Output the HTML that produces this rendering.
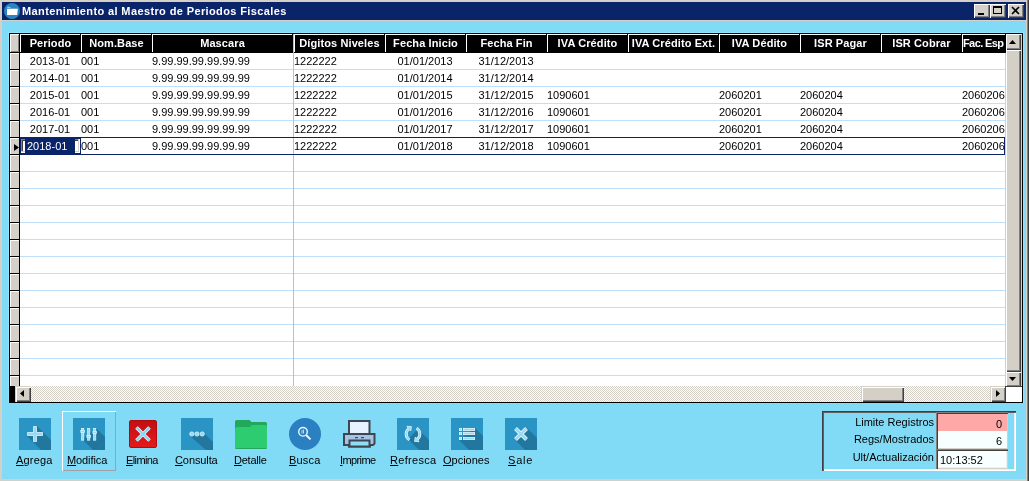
<!DOCTYPE html>
<html><head><meta charset="utf-8"><style>
*{margin:0;padding:0}
html,body{width:1029px;height:481px;overflow:hidden;background:#d4d0c8}
body{position:relative;will-change:transform;font-family:"Liberation Sans",sans-serif}
body>div,body>svg{position:absolute}
u{text-decoration:underline}
</style></head><body>
<div style="left:0px;top:0px;width:1029px;height:481px;background:#d4d0c8"></div>
<div style="left:1027px;top:0px;width:1px;height:481px;background:#808080"></div>
<div style="left:1028px;top:0px;width:1px;height:481px;background:#404040"></div>
<div style="left:2px;top:2px;width:1024px;height:18px;background:#0a246a"></div>
<div style="left:2px;top:21px;width:1024px;height:458px;background:#82dbf6"></div>
<svg style="left:4px;top:3px" width="16" height="16" viewBox="0 0 16 16"><circle cx="8" cy="8" r="7.7" fill="#2a84c2" stroke="#2e92d4" stroke-width="0.6"/><path d="M3.2 4.3h2.6l0.8 0.9" fill="none" stroke="#cde4f4" stroke-width="0.9"/><path d="M3 5.8H13.8L13.2 12H3z" fill="#ffffff"/></svg>
<div style="left:22px;top:2px;width:400px;height:18px;line-height:18px;font-weight:bold;font-size:11px;letter-spacing:0.38px;color:#fff;white-space:nowrap">Mantenimiento al Maestro de Periodos Fiscales</div>
<div style="left:974px;top:4px;width:16px;height:14px;background:#d4d0c8;box-shadow:inset 1px 1px 0 #fff, inset -1px -1px 0 #404040, inset -2px -2px 0 #808080"></div>
<div style="left:978px;top:13px;width:6px;height:2px;background:#000"></div>
<div style="left:990px;top:4px;width:16px;height:14px;background:#d4d0c8;box-shadow:inset 1px 1px 0 #fff, inset -1px -1px 0 #404040, inset -2px -2px 0 #808080"></div>
<div style="left:993px;top:6px;width:9px;height:8px;border:1px solid #000;border-top-width:2px;box-sizing:border-box"></div>
<div style="left:1008px;top:4px;width:16px;height:14px;background:#d4d0c8;box-shadow:inset 1px 1px 0 #fff, inset -1px -1px 0 #404040, inset -2px -2px 0 #808080"></div>
<svg style="left:1011px;top:6px" width="10" height="9" viewBox="0 0 10 9"><path d="M1 1L8 8M8 1L1 8" stroke="#000" stroke-width="1.6"/></svg>
<div style="left:8px;top:32px;width:1016px;height:1px;background:#8ce7ff"></div>
<div style="left:8px;top:32px;width:1px;height:371px;background:#8ce7ff"></div>
<div style="left:1023px;top:32px;width:1px;height:371px;background:#8ce7ff"></div>
<div style="left:9px;top:33px;width:1014px;height:370px;background:#000"></div>
<div style="left:20px;top:53px;width:985px;height:333px;background:#fff"></div>
<div style="left:20px;top:69px;width:985px;height:1px;background:#bfe0f8"></div>
<div style="left:20px;top:86px;width:985px;height:1px;background:#bfe0f8"></div>
<div style="left:20px;top:103px;width:985px;height:1px;background:#bfe0f8"></div>
<div style="left:20px;top:120px;width:985px;height:1px;background:#bfe0f8"></div>
<div style="left:20px;top:137px;width:985px;height:1px;background:#bfe0f8"></div>
<div style="left:20px;top:154px;width:985px;height:1px;background:#bfe0f8"></div>
<div style="left:20px;top:171px;width:985px;height:1px;background:#bfe0f8"></div>
<div style="left:20px;top:188px;width:985px;height:1px;background:#bfe0f8"></div>
<div style="left:20px;top:205px;width:985px;height:1px;background:#bfe0f8"></div>
<div style="left:20px;top:222px;width:985px;height:1px;background:#bfe0f8"></div>
<div style="left:20px;top:239px;width:985px;height:1px;background:#bfe0f8"></div>
<div style="left:20px;top:256px;width:985px;height:1px;background:#bfe0f8"></div>
<div style="left:20px;top:273px;width:985px;height:1px;background:#bfe0f8"></div>
<div style="left:20px;top:290px;width:985px;height:1px;background:#bfe0f8"></div>
<div style="left:20px;top:307px;width:985px;height:1px;background:#bfe0f8"></div>
<div style="left:20px;top:324px;width:985px;height:1px;background:#bfe0f8"></div>
<div style="left:20px;top:341px;width:985px;height:1px;background:#bfe0f8"></div>
<div style="left:20px;top:358px;width:985px;height:1px;background:#bfe0f8"></div>
<div style="left:20px;top:375px;width:985px;height:1px;background:#bfe0f8"></div>
<div style="left:10px;top:34px;width:9px;height:18px;background:#d4d0c8;box-shadow:inset 1px 1px 0 #fff, inset -1px -1px 0 #808080"></div>
<div style="left:10px;top:53px;width:9px;height:16px;background:#d4d0c8;box-shadow:inset 1px 1px 0 #fff"></div>
<div style="left:10px;top:70px;width:9px;height:16px;background:#d4d0c8;box-shadow:inset 1px 1px 0 #fff"></div>
<div style="left:10px;top:87px;width:9px;height:16px;background:#d4d0c8;box-shadow:inset 1px 1px 0 #fff"></div>
<div style="left:10px;top:104px;width:9px;height:16px;background:#d4d0c8;box-shadow:inset 1px 1px 0 #fff"></div>
<div style="left:10px;top:121px;width:9px;height:16px;background:#d4d0c8;box-shadow:inset 1px 1px 0 #fff"></div>
<div style="left:10px;top:138px;width:9px;height:16px;background:#d4d0c8;box-shadow:inset 1px 1px 0 #fff"></div>
<div style="left:10px;top:155px;width:9px;height:16px;background:#d4d0c8;box-shadow:inset 1px 1px 0 #fff"></div>
<div style="left:10px;top:172px;width:9px;height:16px;background:#d4d0c8;box-shadow:inset 1px 1px 0 #fff"></div>
<div style="left:10px;top:189px;width:9px;height:16px;background:#d4d0c8;box-shadow:inset 1px 1px 0 #fff"></div>
<div style="left:10px;top:206px;width:9px;height:16px;background:#d4d0c8;box-shadow:inset 1px 1px 0 #fff"></div>
<div style="left:10px;top:223px;width:9px;height:16px;background:#d4d0c8;box-shadow:inset 1px 1px 0 #fff"></div>
<div style="left:10px;top:240px;width:9px;height:16px;background:#d4d0c8;box-shadow:inset 1px 1px 0 #fff"></div>
<div style="left:10px;top:257px;width:9px;height:16px;background:#d4d0c8;box-shadow:inset 1px 1px 0 #fff"></div>
<div style="left:10px;top:274px;width:9px;height:16px;background:#d4d0c8;box-shadow:inset 1px 1px 0 #fff"></div>
<div style="left:10px;top:291px;width:9px;height:16px;background:#d4d0c8;box-shadow:inset 1px 1px 0 #fff"></div>
<div style="left:10px;top:308px;width:9px;height:16px;background:#d4d0c8;box-shadow:inset 1px 1px 0 #fff"></div>
<div style="left:10px;top:325px;width:9px;height:16px;background:#d4d0c8;box-shadow:inset 1px 1px 0 #fff"></div>
<div style="left:10px;top:342px;width:9px;height:16px;background:#d4d0c8;box-shadow:inset 1px 1px 0 #fff"></div>
<div style="left:10px;top:359px;width:9px;height:16px;background:#d4d0c8;box-shadow:inset 1px 1px 0 #fff"></div>
<div style="left:10px;top:376px;width:9px;height:10px;background:#d4d0c8;box-shadow:inset 1px 1px 0 #fff"></div>
<div style="left:20px;top:34px;width:60px;height:18px;border-top:1px solid #fff;border-left:1px solid #fff;box-sizing:border-box;color:#fff;font-weight:bold;font-size:11px;letter-spacing:0.1px;line-height:17px;text-align:center;white-space:nowrap;overflow:hidden">Periodo</div>
<div style="left:81px;top:34px;width:70px;height:18px;border-top:1px solid #fff;border-left:1px solid #fff;box-sizing:border-box;color:#fff;font-weight:bold;font-size:11px;letter-spacing:0.1px;line-height:17px;text-align:center;white-space:nowrap;overflow:hidden">Nom.Base</div>
<div style="left:152px;top:34px;width:140px;height:18px;border-top:1px solid #fff;border-left:1px solid #fff;box-sizing:border-box;color:#fff;font-weight:bold;font-size:11px;letter-spacing:0.1px;line-height:17px;text-align:center;white-space:nowrap;overflow:hidden">Mascara</div>
<div style="left:294px;top:34px;width:90px;height:18px;border-top:1px solid #fff;border-left:1px solid #fff;box-sizing:border-box;color:#fff;font-weight:bold;font-size:11px;letter-spacing:0.1px;line-height:17px;text-align:center;white-space:nowrap;overflow:hidden">Dígitos Niveles</div>
<div style="left:385px;top:34px;width:80px;height:18px;border-top:1px solid #fff;border-left:1px solid #fff;box-sizing:border-box;color:#fff;font-weight:bold;font-size:11px;letter-spacing:0.1px;line-height:17px;text-align:center;white-space:nowrap;overflow:hidden">Fecha Inicio</div>
<div style="left:466px;top:34px;width:80px;height:18px;border-top:1px solid #fff;border-left:1px solid #fff;box-sizing:border-box;color:#fff;font-weight:bold;font-size:11px;letter-spacing:0.1px;line-height:17px;text-align:center;white-space:nowrap;overflow:hidden">Fecha Fin</div>
<div style="left:547px;top:34px;width:80px;height:18px;border-top:1px solid #fff;border-left:1px solid #fff;box-sizing:border-box;color:#fff;font-weight:bold;font-size:11px;letter-spacing:0.1px;line-height:17px;text-align:center;white-space:nowrap;overflow:hidden">IVA Crédito</div>
<div style="left:628px;top:34px;width:90px;height:18px;border-top:1px solid #fff;border-left:1px solid #fff;box-sizing:border-box;color:#fff;font-weight:bold;font-size:11px;letter-spacing:0.1px;line-height:17px;text-align:center;white-space:nowrap;overflow:hidden">IVA Crédito Ext.</div>
<div style="left:719px;top:34px;width:80px;height:18px;border-top:1px solid #fff;border-left:1px solid #fff;box-sizing:border-box;color:#fff;font-weight:bold;font-size:11px;letter-spacing:0.1px;line-height:17px;text-align:center;white-space:nowrap;overflow:hidden">IVA Dédito</div>
<div style="left:800px;top:34px;width:80px;height:18px;border-top:1px solid #fff;border-left:1px solid #fff;box-sizing:border-box;color:#fff;font-weight:bold;font-size:11px;letter-spacing:0.1px;line-height:17px;text-align:center;white-space:nowrap;overflow:hidden">ISR Pagar</div>
<div style="left:881px;top:34px;width:80px;height:18px;border-top:1px solid #fff;border-left:1px solid #fff;box-sizing:border-box;color:#fff;font-weight:bold;font-size:11px;letter-spacing:0.1px;line-height:17px;text-align:center;white-space:nowrap;overflow:hidden">ISR Cobrar</div>
<div style="left:962px;top:34px;width:43px;height:18px;border-top:1px solid #fff;border-left:1px solid #fff;box-sizing:border-box;color:#fff;font-weight:bold;font-size:11px;letter-spacing:0.1px;line-height:17px;text-align:center;white-space:nowrap;overflow:hidden;text-align:left;text-indent:0px;letter-spacing:-0.6px">Fac. Esp</div>
<div style="left:293px;top:34px;width:1px;height:352px;background:#80d6f2"></div>
<div style="left:20px;top:53px;width:60px;height:16px;font-size:11px;line-height:16px;text-align:center;color:#000;white-space:nowrap;overflow:hidden">2013-01</div>
<div style="left:81px;top:53px;width:70px;height:16px;font-size:11px;line-height:16px;text-align:left;padding-left:0px;color:#000;white-space:nowrap;overflow:hidden;box-sizing:border-box">001</div>
<div style="left:152px;top:53px;width:140px;height:16px;font-size:11px;line-height:16px;text-align:left;padding-left:0px;color:#000;white-space:nowrap;overflow:hidden;box-sizing:border-box">9.99.99.99.99.99.99</div>
<div style="left:294px;top:53px;width:90px;height:16px;font-size:11px;line-height:16px;text-align:left;padding-left:0px;color:#000;white-space:nowrap;overflow:hidden;box-sizing:border-box">1222222</div>
<div style="left:385px;top:53px;width:80px;height:16px;font-size:11px;line-height:16px;text-align:center;color:#000;white-space:nowrap;overflow:hidden">01/01/2013</div>
<div style="left:466px;top:53px;width:80px;height:16px;font-size:11px;line-height:16px;text-align:center;color:#000;white-space:nowrap;overflow:hidden">31/12/2013</div>
<div style="left:20px;top:70px;width:60px;height:16px;font-size:11px;line-height:16px;text-align:center;color:#000;white-space:nowrap;overflow:hidden">2014-01</div>
<div style="left:81px;top:70px;width:70px;height:16px;font-size:11px;line-height:16px;text-align:left;padding-left:0px;color:#000;white-space:nowrap;overflow:hidden;box-sizing:border-box">001</div>
<div style="left:152px;top:70px;width:140px;height:16px;font-size:11px;line-height:16px;text-align:left;padding-left:0px;color:#000;white-space:nowrap;overflow:hidden;box-sizing:border-box">9.99.99.99.99.99.99</div>
<div style="left:294px;top:70px;width:90px;height:16px;font-size:11px;line-height:16px;text-align:left;padding-left:0px;color:#000;white-space:nowrap;overflow:hidden;box-sizing:border-box">1222222</div>
<div style="left:385px;top:70px;width:80px;height:16px;font-size:11px;line-height:16px;text-align:center;color:#000;white-space:nowrap;overflow:hidden">01/01/2014</div>
<div style="left:466px;top:70px;width:80px;height:16px;font-size:11px;line-height:16px;text-align:center;color:#000;white-space:nowrap;overflow:hidden">31/12/2014</div>
<div style="left:20px;top:87px;width:60px;height:16px;font-size:11px;line-height:16px;text-align:center;color:#000;white-space:nowrap;overflow:hidden">2015-01</div>
<div style="left:81px;top:87px;width:70px;height:16px;font-size:11px;line-height:16px;text-align:left;padding-left:0px;color:#000;white-space:nowrap;overflow:hidden;box-sizing:border-box">001</div>
<div style="left:152px;top:87px;width:140px;height:16px;font-size:11px;line-height:16px;text-align:left;padding-left:0px;color:#000;white-space:nowrap;overflow:hidden;box-sizing:border-box">9.99.99.99.99.99.99</div>
<div style="left:294px;top:87px;width:90px;height:16px;font-size:11px;line-height:16px;text-align:left;padding-left:0px;color:#000;white-space:nowrap;overflow:hidden;box-sizing:border-box">1222222</div>
<div style="left:385px;top:87px;width:80px;height:16px;font-size:11px;line-height:16px;text-align:center;color:#000;white-space:nowrap;overflow:hidden">01/01/2015</div>
<div style="left:466px;top:87px;width:80px;height:16px;font-size:11px;line-height:16px;text-align:center;color:#000;white-space:nowrap;overflow:hidden">31/12/2015</div>
<div style="left:547px;top:87px;width:80px;height:16px;font-size:11px;line-height:16px;text-align:left;padding-left:0px;color:#000;white-space:nowrap;overflow:hidden;box-sizing:border-box">1090601</div>
<div style="left:719px;top:87px;width:80px;height:16px;font-size:11px;line-height:16px;text-align:left;padding-left:0px;color:#000;white-space:nowrap;overflow:hidden;box-sizing:border-box">2060201</div>
<div style="left:800px;top:87px;width:80px;height:16px;font-size:11px;line-height:16px;text-align:left;padding-left:0px;color:#000;white-space:nowrap;overflow:hidden;box-sizing:border-box">2060204</div>
<div style="left:962px;top:87px;width:43px;height:16px;font-size:11px;line-height:16px;text-align:left;padding-left:0px;color:#000;white-space:nowrap;overflow:hidden;box-sizing:border-box">2060206</div>
<div style="left:20px;top:104px;width:60px;height:16px;font-size:11px;line-height:16px;text-align:center;color:#000;white-space:nowrap;overflow:hidden">2016-01</div>
<div style="left:81px;top:104px;width:70px;height:16px;font-size:11px;line-height:16px;text-align:left;padding-left:0px;color:#000;white-space:nowrap;overflow:hidden;box-sizing:border-box">001</div>
<div style="left:152px;top:104px;width:140px;height:16px;font-size:11px;line-height:16px;text-align:left;padding-left:0px;color:#000;white-space:nowrap;overflow:hidden;box-sizing:border-box">9.99.99.99.99.99.99</div>
<div style="left:294px;top:104px;width:90px;height:16px;font-size:11px;line-height:16px;text-align:left;padding-left:0px;color:#000;white-space:nowrap;overflow:hidden;box-sizing:border-box">1222222</div>
<div style="left:385px;top:104px;width:80px;height:16px;font-size:11px;line-height:16px;text-align:center;color:#000;white-space:nowrap;overflow:hidden">01/01/2016</div>
<div style="left:466px;top:104px;width:80px;height:16px;font-size:11px;line-height:16px;text-align:center;color:#000;white-space:nowrap;overflow:hidden">31/12/2016</div>
<div style="left:547px;top:104px;width:80px;height:16px;font-size:11px;line-height:16px;text-align:left;padding-left:0px;color:#000;white-space:nowrap;overflow:hidden;box-sizing:border-box">1090601</div>
<div style="left:719px;top:104px;width:80px;height:16px;font-size:11px;line-height:16px;text-align:left;padding-left:0px;color:#000;white-space:nowrap;overflow:hidden;box-sizing:border-box">2060201</div>
<div style="left:800px;top:104px;width:80px;height:16px;font-size:11px;line-height:16px;text-align:left;padding-left:0px;color:#000;white-space:nowrap;overflow:hidden;box-sizing:border-box">2060204</div>
<div style="left:962px;top:104px;width:43px;height:16px;font-size:11px;line-height:16px;text-align:left;padding-left:0px;color:#000;white-space:nowrap;overflow:hidden;box-sizing:border-box">2060206</div>
<div style="left:20px;top:121px;width:60px;height:16px;font-size:11px;line-height:16px;text-align:center;color:#000;white-space:nowrap;overflow:hidden">2017-01</div>
<div style="left:81px;top:121px;width:70px;height:16px;font-size:11px;line-height:16px;text-align:left;padding-left:0px;color:#000;white-space:nowrap;overflow:hidden;box-sizing:border-box">001</div>
<div style="left:152px;top:121px;width:140px;height:16px;font-size:11px;line-height:16px;text-align:left;padding-left:0px;color:#000;white-space:nowrap;overflow:hidden;box-sizing:border-box">9.99.99.99.99.99.99</div>
<div style="left:294px;top:121px;width:90px;height:16px;font-size:11px;line-height:16px;text-align:left;padding-left:0px;color:#000;white-space:nowrap;overflow:hidden;box-sizing:border-box">1222222</div>
<div style="left:385px;top:121px;width:80px;height:16px;font-size:11px;line-height:16px;text-align:center;color:#000;white-space:nowrap;overflow:hidden">01/01/2017</div>
<div style="left:466px;top:121px;width:80px;height:16px;font-size:11px;line-height:16px;text-align:center;color:#000;white-space:nowrap;overflow:hidden">31/12/2017</div>
<div style="left:547px;top:121px;width:80px;height:16px;font-size:11px;line-height:16px;text-align:left;padding-left:0px;color:#000;white-space:nowrap;overflow:hidden;box-sizing:border-box">1090601</div>
<div style="left:719px;top:121px;width:80px;height:16px;font-size:11px;line-height:16px;text-align:left;padding-left:0px;color:#000;white-space:nowrap;overflow:hidden;box-sizing:border-box">2060201</div>
<div style="left:800px;top:121px;width:80px;height:16px;font-size:11px;line-height:16px;text-align:left;padding-left:0px;color:#000;white-space:nowrap;overflow:hidden;box-sizing:border-box">2060204</div>
<div style="left:962px;top:121px;width:43px;height:16px;font-size:11px;line-height:16px;text-align:left;padding-left:0px;color:#000;white-space:nowrap;overflow:hidden;box-sizing:border-box">2060206</div>
<div style="left:20px;top:137px;width:985px;height:18px;border:1px solid #0a246a;box-sizing:border-box"></div>
<div style="left:20px;top:138px;width:61px;height:16px;background:#0a246a"></div>
<div style="left:21px;top:139px;width:59px;height:14px;background:#fff;box-shadow:inset -1px -1px 0 #fff, inset -2px -2px 0 #d4d0c8, inset 1px 1px 0 #808080, inset 2px 2px 0 #404040"></div>
<div style="left:25px;top:138px;width:50px;height:16px;background:#0a246a"></div>
<svg style="left:14px;top:144px" width="5" height="7" viewBox="0 0 5 7"><path d="M0 0L5 3.5L0 7z" fill="#000"/></svg>
<div style="left:27px;top:138px;width:50px;height:16px;font-size:11px;line-height:16px;color:#fff;white-space:nowrap">2018-01</div>
<div style="left:81px;top:138px;width:70px;height:16px;font-size:11px;line-height:16px;text-align:left;padding-left:0px;color:#000;white-space:nowrap;overflow:hidden;box-sizing:border-box">001</div>
<div style="left:152px;top:138px;width:140px;height:16px;font-size:11px;line-height:16px;text-align:left;padding-left:0px;color:#000;white-space:nowrap;overflow:hidden;box-sizing:border-box">9.99.99.99.99.99.99</div>
<div style="left:294px;top:138px;width:90px;height:16px;font-size:11px;line-height:16px;text-align:left;padding-left:0px;color:#000;white-space:nowrap;overflow:hidden;box-sizing:border-box">1222222</div>
<div style="left:385px;top:138px;width:80px;height:16px;font-size:11px;line-height:16px;text-align:center;color:#000;white-space:nowrap;overflow:hidden">01/01/2018</div>
<div style="left:466px;top:138px;width:80px;height:16px;font-size:11px;line-height:16px;text-align:center;color:#000;white-space:nowrap;overflow:hidden">31/12/2018</div>
<div style="left:547px;top:138px;width:80px;height:16px;font-size:11px;line-height:16px;text-align:left;padding-left:0px;color:#000;white-space:nowrap;overflow:hidden;box-sizing:border-box">1090601</div>
<div style="left:719px;top:138px;width:80px;height:16px;font-size:11px;line-height:16px;text-align:left;padding-left:0px;color:#000;white-space:nowrap;overflow:hidden;box-sizing:border-box">2060201</div>
<div style="left:800px;top:138px;width:80px;height:16px;font-size:11px;line-height:16px;text-align:left;padding-left:0px;color:#000;white-space:nowrap;overflow:hidden;box-sizing:border-box">2060204</div>
<div style="left:962px;top:138px;width:43px;height:16px;font-size:11px;line-height:16px;text-align:left;padding-left:0px;color:#000;white-space:nowrap;overflow:hidden;box-sizing:border-box">2060206</div>
<div style="left:1006px;top:34px;width:15px;height:353px;background:#d4d0c8"></div>
<div style="left:1006px;top:34px;width:15px;height:16px;background:#d4d0c8;box-shadow:inset 1px 1px 0 #fff, inset -1px -1px 0 #404040, inset -2px -2px 0 #808080"></div>
<svg style="left:1009px;top:40px" width="7" height="4" viewBox="0 0 7 4"><path d="M3.5 0L7 4H0z" fill="#000"/></svg>
<div style="left:1006px;top:50px;width:15px;height:322px;background:#d4d0c8;box-shadow:inset 1px 1px 0 #fff, inset -1px -1px 0 #404040, inset -2px -2px 0 #808080"></div>
<div style="left:1006px;top:372px;width:15px;height:15px;background:#d4d0c8;box-shadow:inset 1px 1px 0 #fff, inset -1px -1px 0 #404040, inset -2px -2px 0 #808080"></div>
<svg style="left:1009px;top:377px" width="7" height="4" viewBox="0 0 7 4"><path d="M0 0H7L3.5 4z" fill="#000"/></svg>
<div style="left:1021px;top:34px;width:1px;height:353px;background:#8ce7ff"></div>
<div style="left:1005px;top:53px;width:1px;height:333px;background:#d4d0c8"></div>
<div style="left:31px;top:386px;width:959px;height:16px;background-color:#fff;background-image:repeating-conic-gradient(#d4d0c8 0 25%, #fff 0 50%);background-size:2px 2px"></div>
<div style="left:15px;top:386px;width:16px;height:16px;background:#d4d0c8;box-shadow:inset 1px 1px 0 #d4d0c8, inset 2px 2px 0 #fff, inset -1px -1px 0 #404040, inset -2px -2px 0 #808080;"></div>
<svg style="left:20px;top:390px" width="4" height="7" viewBox="0 0 4 7"><path d="M4 0V7L0 3.5z" fill="#000"/></svg>
<div style="left:861px;top:386px;width:43px;height:16px;background:#d4d0c8;box-shadow:inset 1px 1px 0 #d4d0c8, inset 2px 2px 0 #fff, inset -1px -1px 0 #404040, inset -2px -2px 0 #808080;"></div>
<div style="left:990px;top:386px;width:16px;height:16px;background:#d4d0c8;box-shadow:inset 1px 1px 0 #d4d0c8, inset 2px 2px 0 #fff, inset -1px -1px 0 #404040, inset -2px -2px 0 #808080;"></div>
<svg style="left:996px;top:390px" width="4" height="7" viewBox="0 0 4 7"><path d="M0 0V7L4 3.5z" fill="#000"/></svg>
<div style="left:1006px;top:387px;width:16px;height:15px;background:#fff"></div>
<div style="left:1005px;top:386px;width:1px;height:16px;background:#404040"></div>
<div style="left:1005px;top:386px;width:17px;height:1px;background:#404040"></div>
<div style="left:62px;top:411px;width:54px;height:60px;box-shadow:inset 1px 1px 0 #fff, inset -1px -1px 0 #a0a0a0"></div>
<svg style="left:19px;top:418px" width="32" height="32" viewBox="0 0 32 32"><rect width="32" height="32" fill="#2a95c4"/><path d="M18 8L32 22V32H22L8 18V14H14V8z" fill="#22779f"/><path d="M14.5 8.5h3v6h6v3h-6v6h-3v-6h-6v-3h6z" fill="#98daf3" stroke="#e2f6ff" stroke-width="0.8"/></svg>
<svg style="left:73px;top:418px" width="32" height="32" viewBox="0 0 32 32"><rect width="32" height="32" fill="#2a95c4"/><path d="M23 10L32 19V32H20L9 21z" fill="#22779f"/><g fill="#98daf3" stroke="#e2f6ff" stroke-width="0.7"><rect x="8.6" y="10.4" width="2.2" height="11.8"/><rect x="14.6" y="10.4" width="2.2" height="11.8"/><rect x="20.6" y="10.4" width="2.2" height="11.8"/><rect x="7.8" y="12.6" width="3.8" height="1.8"/><rect x="13.8" y="17.6" width="3.8" height="1.8"/><rect x="19.8" y="13.6" width="3.8" height="1.8"/></g></svg>
<svg style="left:129px;top:420px" width="28" height="28" viewBox="0 0 28 28"><defs><linearGradient id="rg" x1="0" y1="0" x2="0" y2="1"><stop offset="0" stop-color="#c01014"/><stop offset="1" stop-color="#e41a1a"/></linearGradient></defs><rect x="0.5" y="0.5" width="27" height="27" rx="1.5" fill="url(#rg)" stroke="#b00c10" stroke-width="1"/><path d="M7.5 7.5L20.5 20.5M20.5 7.5L7.5 20.5" stroke="#e2f6ff" stroke-width="3.6"/><path d="M7.5 7.5L20.5 20.5M20.5 7.5L7.5 20.5" stroke="#88d4f0" stroke-width="2"/></svg>
<svg style="left:181px;top:418px" width="32" height="32" viewBox="0 0 32 32"><rect width="32" height="32" fill="#2a95c4"/><path d="M22 14L32 24V32H25L9 18z" fill="#22779f"/><g fill="#98daf3" stroke="#e2f6ff" stroke-width="0.8"><circle cx="10.8" cy="16" r="2.1"/><circle cx="16" cy="16" r="2.1"/><circle cx="21.2" cy="16" r="2.1"/></g></svg>
<svg style="left:235px;top:420px" width="32" height="29" viewBox="0 0 32 29"><path d="M1.5 0H14.5L16.5 2H30.5Q32 2 32 3.5V27.5Q32 29 30.5 29H1.5Q0 29 0 27.5V1.5Q0 0 1.5 0z" fill="#22a85a"/><path d="M2.5 7H15L17 5H30.5Q32 5 32 6.5V27.5Q32 28 31 28H1Q0 28 0 27V9.5Q0 7 2.5 7z" fill="#2ecc71"/></svg>
<svg style="left:289px;top:418px" width="32" height="32" viewBox="0 0 32 32"><circle cx="16" cy="16" r="16" fill="#2a80c0"/><circle cx="14" cy="13.8" r="4.3" fill="none" stroke="#eef8ff" stroke-width="1.4"/><path d="M17.3 17.2L21.5 21.4" stroke="#eef8ff" stroke-width="2"/><path d="M13 12v3.5M14.5 11.5v4" stroke="#dff0ff" stroke-width="0.8"/></svg>
<svg style="left:343px;top:420px" width="33" height="28" viewBox="0 0 33 28"><rect x="6" y="1" width="20.5" height="13.5" fill="#e6f2ff" stroke="#3d4651" stroke-width="2"/><path d="M1 14H31.5V23.5L30 25H27V26.5H6V25H1z" fill="#a6c2e4" stroke="#3d4651" stroke-width="2"/><rect x="6.5" y="20.5" width="20" height="6" fill="#8fdcf6" stroke="#3d4651" stroke-width="2"/><rect x="12" y="17" width="3" height="1.3" rx="0.6" fill="#3d4651"/><rect x="18" y="17" width="3" height="1.3" rx="0.6" fill="#3d4651"/></svg>
<svg style="left:397px;top:418px" width="32" height="32" viewBox="0 0 32 32"><rect width="32" height="32" fill="#2a95c4"/><path d="M21 11L32 22V32H22L11 21z" fill="#22779f"/><path d="M12.40 21.77A6.8 6.8 0 0 1 11.81 10.64M19.60 10.23A6.8 6.8 0 0 1 20.19 21.36" fill="none" stroke="#e2f6ff" stroke-width="3"/><path d="M14.34 8.67L9.97 8.28L13.66 13.01zM17.66 23.33L22.03 23.72L18.34 18.99z" fill="#e2f6ff" stroke="#e2f6ff" stroke-width="1"/><path d="M12.40 21.77A6.8 6.8 0 0 1 11.81 10.64M19.60 10.23A6.8 6.8 0 0 1 20.19 21.36" fill="none" stroke="#98daf3" stroke-width="1.6"/><path d="M14.34 8.67L9.97 8.28L13.66 13.01zM17.66 23.33L22.03 23.72L18.34 18.99z" fill="#98daf3"/></svg>
<svg style="left:451px;top:418px" width="32" height="32" viewBox="0 0 32 32"><rect width="32" height="32" fill="#2a95c4"/><path d="M24 10L32 18V32H18L8 22z" fill="#22779f"/><g fill="#98daf3" stroke="#e2f6ff" stroke-width="0.8"><rect x="8.4" y="10.4" width="2.2" height="2.2"/><rect x="8.4" y="14.4" width="2.2" height="2.2"/><rect x="8.4" y="19.4" width="2.2" height="2.2"/><rect x="12.4" y="10.4" width="11.2" height="2.2"/><rect x="12.4" y="14.4" width="11.2" height="2.2"/><rect x="12.4" y="19.4" width="11.2" height="2.2"/></g></svg>
<svg style="left:505px;top:418px" width="32" height="32" viewBox="0 0 32 32"><rect width="32" height="32" fill="#2a95c4"/><path d="M22 10L32 20V32H20L10 22z" fill="#22779f"/><path d="M10.5 10.5L21.5 21.5M21.5 10.5L10.5 21.5" stroke="#e2f6ff" stroke-width="4"/><path d="M10.5 10.5L21.5 21.5M21.5 10.5L10.5 21.5" stroke="#98daf3" stroke-width="2.4"/></svg>
<div style="left:16px;top:453px;width:80px;height:14px;font-size:11px;line-height:14px;letter-spacing:0.2px;color:#000;white-space:nowrap"><u>A</u>grega</div>
<div style="left:67px;top:453px;width:80px;height:14px;font-size:11px;line-height:14px;letter-spacing:-0.1px;color:#000;white-space:nowrap"><u>M</u>odifica</div>
<div style="left:126px;top:453px;width:80px;height:14px;font-size:11px;line-height:14px;letter-spacing:-0.6px;color:#000;white-space:nowrap"><u>E</u>limina</div>
<div style="left:175px;top:453px;width:80px;height:14px;font-size:11px;line-height:14px;letter-spacing:-0.1px;color:#000;white-space:nowrap"><u>C</u>onsulta</div>
<div style="left:234px;top:453px;width:80px;height:14px;font-size:11px;line-height:14px;letter-spacing:-0.25px;color:#000;white-space:nowrap"><u>D</u>etalle</div>
<div style="left:289px;top:453px;width:80px;height:14px;font-size:11px;line-height:14px;letter-spacing:0.2px;color:#000;white-space:nowrap"><u>B</u>usca</div>
<div style="left:340px;top:453px;width:80px;height:14px;font-size:11px;line-height:14px;letter-spacing:-0.6px;color:#000;white-space:nowrap"><u>I</u>mprime</div>
<div style="left:390px;top:453px;width:80px;height:14px;font-size:11px;line-height:14px;letter-spacing:0.3px;color:#000;white-space:nowrap"><u>R</u>efresca</div>
<div style="left:443px;top:453px;width:80px;height:14px;font-size:11px;line-height:14px;letter-spacing:0px;color:#000;white-space:nowrap"><u>O</u>pciones</div>
<div style="left:508px;top:453px;width:80px;height:14px;font-size:11px;line-height:14px;letter-spacing:0.8px;color:#000;white-space:nowrap"><u>S</u>ale</div>
<div style="left:822px;top:411px;width:194px;height:60px;box-shadow:inset 1px 1px 0 #404040, inset 2px 2px 0 #606060, inset -1px -1px 0 #fff, inset -2px -2px 0 #f0f0f0"></div>
<div style="left:824px;top:413px;width:110px;height:18px;font-size:11px;line-height:18px;text-align:right;color:#000;white-space:nowrap">Limite Registros</div>
<div style="left:824px;top:430px;width:110px;height:18px;font-size:11px;line-height:18px;text-align:right;color:#000;white-space:nowrap">Regs/Mostrados</div>
<div style="left:824px;top:448px;width:110px;height:18px;font-size:11px;line-height:18px;text-align:right;color:#000;white-space:nowrap">Ult/Actualización</div>
<div style="left:936px;top:412px;width:72px;height:37px;background:#f8ffff;box-shadow:inset 1px 1px 0 #808080, inset 2px 2px 0 #404040, inset -1px -1px 0 #d4d0c8"></div>
<div style="left:938px;top:414px;width:69px;height:17px;background:#ffa8a8"></div>
<div style="left:938px;top:431px;width:69px;height:1px;background:#fff"></div>
<div style="left:938px;top:414px;width:64px;height:18px;font-size:11px;line-height:20px;text-align:right;color:#000">0</div>
<div style="left:938px;top:431px;width:64px;height:18px;font-size:11px;line-height:20px;text-align:right;color:#000">6</div>
<div style="left:936px;top:449px;width:72px;height:20px;background:#f8ffff;box-shadow:inset 1px 1px 0 #808080, inset 2px 2px 0 #404040, inset -1px -1px 0 #d4d0c8, inset -2px -2px 0 #f0f0f0"></div>
<div style="left:940px;top:450px;width:65px;height:18px;font-size:11px;line-height:20px;text-align:left;color:#000">10:13:52</div>
</body></html>
